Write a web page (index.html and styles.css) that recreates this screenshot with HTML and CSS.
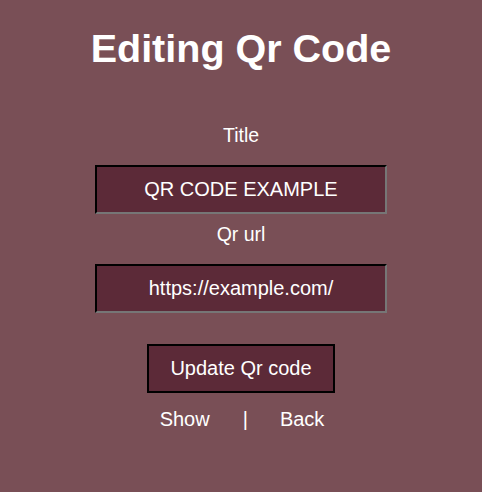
FILE: index.html
```html
<!DOCTYPE html>
<html>
<head>
<meta charset="utf-8">
<link rel="stylesheet" href="styles.css">
</head>
<body>
<main class="page">
  <h1 class="heading">Editing Qr Code</h1>
  <form class="form">
    <label class="label" for="title">Title</label>
    <input class="field" id="title" type="text" value="QR CODE EXAMPLE">
    <label class="label label-url" for="url">Qr url</label>
    <input class="field" id="url" type="text" value="https://example.com/">
    <button class="submit" type="button">Update Qr code</button>
  </form>
  <nav class="links">
    <a class="link" href="#">Show</a>
    <span class="sep">|</span>
    <a class="link" href="#">Back</a>
  </nav>
</main>
</body>
</html>
```
FILE: styles.css
```css
html, body {
  margin: 0;
  padding: 0;
  background: #794f56;
  height: 100%;
}
body {
  font-family: "Liberation Sans", Arial, sans-serif;
  color: #ffffff;
}
.page {
  display: flex;
  flex-direction: column;
  align-items: center;
  padding-top: 26px;
}
.heading {
  margin: 0;
  font-size: 39.5px;
  font-weight: bold;
  line-height: 45px;
}
.form {
  display: flex;
  flex-direction: column;
  align-items: center;
  margin-top: 53px;
}
.label {
  font-size: 19.5px;
  line-height: 23px;
  margin-bottom: 18px;
}
.label-url {
  margin-top: 9px;
  margin-bottom: 18px;
}
.field {
  box-sizing: border-box;
  width: 292px;
  height: 49px;
  background: #5c2a38;
  border: 2px inset #767676;
  border-top-color: #262626;
  border-left-color: #262626;
  border-bottom-color: #767676;
  border-right-color: #767676;
  color: #ffffff;
  font-family: "Liberation Sans", Arial, sans-serif;
  font-size: 20px;
  text-align: center;
  padding: 0;
  outline: none;
}
.submit {
  box-sizing: border-box;
  margin-top: 31px;
  width: 188px;
  height: 49px;
  background: #5c2a38;
  border: 2px solid #000000;
  color: #ffffff;
  font-family: "Liberation Sans", Arial, sans-serif;
  font-size: 20px;
  padding: 0;
}
.links {
  display: flex;
  align-items: center;
  margin-top: 15px;
  margin-left: 2px;
  font-size: 20px;
  line-height: 23px;
}
.link {
  color: #ffffff;
  text-decoration: none;
}
.sep {
  margin: 0 32px 0 33px;
}
```
